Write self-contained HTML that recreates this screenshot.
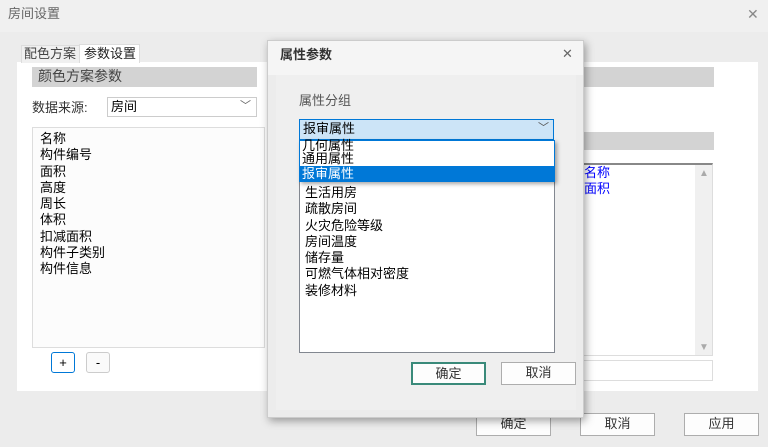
<!DOCTYPE html>
<html><head><meta charset="utf-8"><style>
*{margin:0;padding:0;box-sizing:border-box}
body{width:768px;height:447px;overflow:hidden;background:#ececec;font-family:"Liberation Sans","Noto Sans CJK SC",sans-serif;font-size:13px;color:#000;position:relative}
.a{position:absolute}
.t{position:absolute;white-space:nowrap;line-height:16px}
.btn{position:absolute;background:#fdfdfd;border:1px solid #adadad;text-align:center;line-height:20px;font-size:13px;color:#333}
</style></head><body>
<div class="a" style="left:0;top:0;width:768px;height:32px;background:#f0f0f0"></div>
<div class="t" style="left:8px;top:6px;color:#666;font-size:13px">房间设置</div>
<div class="t" style="left:747px;top:6px;color:#888;font-size:14px">✕</div>

<div class="a" style="left:17px;top:62px;width:741px;height:329px;background:#fff"></div>
<div class="a" style="left:21px;top:45px;width:59px;height:18px;background:#f0f0f0;border:1px solid #ddd;border-bottom:none"></div>
<div class="t" style="left:24px;top:46px;color:#444">配色方案</div>
<div class="a" style="left:79px;top:44px;width:61px;height:19px;background:#fff;border:1px solid #ddd;border-bottom:none"></div>
<div class="t" style="left:84px;top:46px;color:#222">参数设置</div>

<div class="a" style="left:32px;top:67px;width:225px;height:20px;background:#d3d3d3"></div>
<div class="t" style="left:38px;top:68px;font-size:14px;color:#444">颜色方案参数</div>
<div class="t" style="left:32px;top:100px;color:#333">数据来源:</div>
<div class="a" style="left:107px;top:97px;width:150px;height:20px;border:1px solid #ccc;background:#fff"></div>
<div class="t" style="left:111px;top:99px">房间</div>
<div class="t" style="left:240px;top:98px;color:#666;font-size:11px">﹀</div>

<div class="a" style="left:32px;top:127px;width:233px;height:221px;border:1px solid #ddd;background:#fcfcfc"></div>
<div class="a" style="left:40px;top:131px;line-height:16.3px">名称<br>构件编号<br>面积<br>高度<br>周长<br>体积<br>扣减面积<br>构件子类别<br>构件信息</div>
<div class="a" style="left:51px;top:352px;width:24px;height:21px;border:1px solid #0078d7;border-radius:3px;background:#fff;text-align:center;line-height:19px">+</div>
<div class="a" style="left:86px;top:352px;width:24px;height:21px;border:1px solid #ccc;border-radius:3px;background:#fafafa;text-align:center;line-height:19px">-</div>

<div class="a" style="left:580px;top:67px;width:134px;height:20px;background:#d3d3d3"></div>
<div class="a" style="left:580px;top:132px;width:134px;height:18px;background:#d3d3d3"></div>
<div class="a" style="left:580px;top:163px;width:133px;height:193px;border:1px solid #ddd;border-top:2px solid #888;background:#fff"></div>
<div class="a" style="left:695px;top:165px;width:17px;height:190px;background:#f0f0f0"></div>
<div class="t" style="left:699px;top:166px;color:#aaa;font-size:10px">▲</div>
<div class="t" style="left:699px;top:340px;color:#aaa;font-size:10px">▼</div>
<div class="a" style="left:584px;top:165px;color:#00f;line-height:16px">名称<br>面积</div>
<div class="a" style="left:580px;top:360px;width:133px;height:21px;border:1px solid #ddd;background:#fff"></div>

<div class="btn" style="left:476px;top:413px;width:75px;height:23px">确定</div>
<div class="btn" style="left:580px;top:413px;width:75px;height:23px">取消</div>
<div class="btn" style="left:684px;top:413px;width:75px;height:23px">应用</div>

<div class="a" style="left:267px;top:40px;width:317px;height:378px;background:#ececec;border:1px solid #ccc;box-shadow:2px 3px 8px rgba(0,0,0,.35)"></div>
<div class="a" style="left:268px;top:41px;width:315px;height:34px;background:#f5f5f5"></div>
<div class="a" style="left:276px;top:75px;width:300px;height:335px;background:#efefef"></div>
<div class="t" style="left:280px;top:47px;font-weight:bold;color:#333">属性参数</div>
<div class="t" style="left:562px;top:46px;color:#666;font-size:13px">✕</div>
<div class="t" style="left:299px;top:93px;color:#555;font-size:13px">属性分组</div>
<div class="a" style="left:299px;top:119px;width:255px;height:21px;background:#cce4f7;border:1px solid #0078d7"></div>
<div class="t" style="left:303px;top:121px">报审属性</div>
<div class="t" style="left:538px;top:120px;color:#555;font-size:11px">﹀</div>
<div class="a" style="left:299px;top:140px;width:256px;height:213px;background:#fff;border:1px solid #828790"></div>
<div class="a" style="left:305px;top:185px;line-height:16.3px">生活用房<br>疏散房间<br>火灾危险等级<br>房间温度<br>储存量<br>可燃气体相对密度<br>装修材料</div>
<div class="a" style="left:299px;top:140px;width:256px;height:42px;background:#fff;border:1px solid #0078d7;box-shadow:2px 2px 4px rgba(0,0,0,.35)"></div>
<div class="t" style="left:302px;top:139px;line-height:14px">几何属性</div>
<div class="t" style="left:302px;top:152px;line-height:14px">通用属性</div>
<div class="a" style="left:300px;top:166px;width:254px;height:15px;background:#0078d7"></div>
<div class="t" style="left:302px;top:166px;line-height:15px;color:#fff">报审属性</div>
<div class="btn" style="left:411px;top:362px;width:75px;height:23px;border:2px solid #3a8a7a;line-height:19px">确定</div>
<div class="btn" style="left:501px;top:362px;width:75px;height:23px">取消</div>
</body></html>
